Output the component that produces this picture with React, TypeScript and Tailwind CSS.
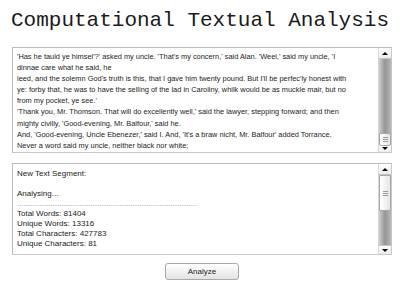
import React from 'react';

const passage = [
    "'Has he tauld ye himsel'?' asked my uncle. 'That's my concern,' said Alan. 'Weel,' said my uncle, 'I",
    'dinnae care what he said, he',
    "leed, and the solemn God's truth is this, that I gave him twenty pound. But I'll be perfec'ly honest with",
    'ye: forby that, he was to have the selling of the lad in Caroliny, whilk would be as muckle mair, but no',
    "from my pocket, ye see.'",
    "'Thank you, Mr. Thomson. That will do excellently well,' said the lawyer, stepping forward; and then",
    "mighty civilly, 'Good-evening, Mr. Balfour,' said he.",
    "And, 'Good-evening, Uncle Ebenezer,' said I. And, 'It's a braw nicht, Mr. Balfour' added Torrance.",
    'Never a word said my uncle, neither black nor white;',
];

const results = [
    'New Text Segment:',
    '',
    'Analysing...',
    '.................................................................................',
    'Total Words: 81404',
    'Unique Words: 13316',
    'Total Characters: 427783',
    'Unique Characters: 81',
];

// Old-style scrollbar: arrow, track, thumb, arrow
function ScrollBar({ thumbTop, thumbHeight }: { thumbTop: number; thumbHeight: number }) {
    return (
        <div className="relative flex w-[13px] shrink-0 flex-col border-l border-[#d6d6d6] bg-white">
            <div className="flex h-[11px] items-center justify-center border-b border-[#c4c4c4] bg-gradient-to-b from-white to-[#ececec]">
                <div className="h-0 w-0 border-x-[3px] border-b-[3px] border-x-transparent border-b-black" />
            </div>
            <div className="relative flex-1 bg-gradient-to-r from-[#cfcfcf] via-[#959595] to-[#b8b8b8]">
                <div
                    className="absolute left-0 right-0 flex items-center justify-center rounded-[2px] border border-[#a8a8a8] bg-gradient-to-r from-white to-[#e6e6e6]"
                    style={{ top: thumbTop, height: thumbHeight }}
                >
                    <div className="flex flex-col gap-[1px]">
                        <div className="h-[1px] w-[5px] bg-[#9a9a9a]" />
                        <div className="h-[1px] w-[5px] bg-[#9a9a9a]" />
                        <div className="h-[1px] w-[5px] bg-[#9a9a9a]" />
                    </div>
                </div>
            </div>
            <div className="flex h-[9px] items-center justify-center border-t border-[#c4c4c4] bg-gradient-to-b from-white to-[#ececec]">
                <div className="h-0 w-0 border-x-[3px] border-t-[3px] border-x-transparent border-t-black" />
            </div>
        </div>
    );
}

export default function App() {
    return (
        <div className="h-[291px] w-[400px] overflow-hidden bg-white font-['Liberation_Sans',Arial,sans-serif] text-[#222]">
            <h1 className="pt-[9px] text-center font-['Liberation_Mono','Courier_New',monospace] text-[21px] leading-[24px] text-[#1a1a1a]">
                Computational Textual Analysis
            </h1>

            <div className="ml-[12px] mt-[14px] flex w-[380px] flex-col">
                {/* Source text */}
                <div className="flex h-[106px] border border-[#c8c8c8] border-l-[#b9b9b9] border-t-[#b9b9b9] bg-white">
                    <div className="flex-1 overflow-hidden px-[4px] pt-[3px] text-[7.4px] leading-[11.1px]">
                        {passage.map((line, i) => (
                            <div key={i} className="whitespace-nowrap">{line}</div>
                        ))}
                    </div>
                    <ScrollBar thumbTop={74} thumbHeight={13} />
                </div>

                {/* Results */}
                <div className="mt-[10px] flex h-[92px] border border-[#c8c8c8] border-l-[#b9b9b9] border-t-[#b9b9b9] bg-white">
                    <div className="flex-1 overflow-hidden px-[4px] pt-[5px] text-[8px] leading-[10px]">
                        {results.map((line, i) => (
                            <div key={i} className={`h-[10px] whitespace-nowrap ${line.startsWith('...') ? 'text-[#888]' : ''}`}>{line}</div>
                        ))}
                    </div>
                    <ScrollBar thumbTop={0} thumbHeight={36} />
                </div>

                <div className="mt-[8px] flex justify-center">
                    <button className="h-[17px] w-[74px] rounded-[3px] border border-[#a9a9a9] bg-gradient-to-b from-white to-[#e3e3e3] text-[8px] leading-none text-[#222]">
                        Analyze
                    </button>
                </div>
            </div>
        </div>
    );
}
